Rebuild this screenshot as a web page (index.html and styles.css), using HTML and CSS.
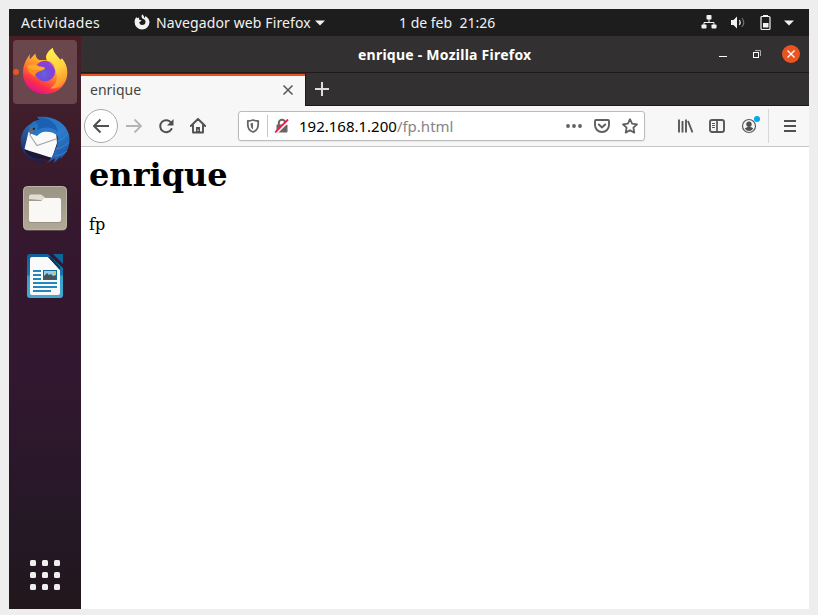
FILE: index.html
```html
<!DOCTYPE html>
<html lang="es">
<head>
<meta charset="utf-8">
<title>enrique - Mozilla Firefox</title>
<link rel="stylesheet" href="styles.css">
</head>
<body>
<div class="desktop">
  <header class="topbar">
    <span class="activities">Actividades</span>
    <svg class="app-mark" width="18" height="18" viewBox="0 0 18 18"><path d="M9.200 1.200c1.500 1.200 2 2.500 1.900 3.700.8-.3 1.200-1.300 1.100-2 2.800 1.300 4.300 3.600 4.300 6.400A7.400 7.400 0 0 1 9 16.500 7.400 7.400 0 0 1 1.600 9c0-2.100.7-3.800 1.900-5l.5 1.200c1-.5 1.800-.6 2.600-.5-.9.7-.9 1.500-.2 2.100l2 .5c-.2 1.200-1.200 1.100-2 1.800-.1 1.800 1 3 2.800 3 2 0 3.300-1.300 3.300-3.100 0-1.400-.7-2.400-2.100-2.900C8.300 5 8.100 2.900 9.200 1.200z" fill="#f2f2f2"/></svg>
    <span class="app-name">Navegador web Firefox</span>
    <svg class="app-caret" width="10" height="6" viewBox="0 0 10 6"><path d="M0 .5h10L5 5.500z" fill="#f2f2f2"/></svg>
    <span class="clock">1 de feb&nbsp; 21:26</span>
    <div class="status">
      <svg width="16" height="16" viewBox="0 0 16 16" fill="#f2f2f2"><rect x="5.500" y="0" width="5" height="4.500" rx=".8"/><rect x=".5" y="9.500" width="5" height="4" rx=".8"/><rect x="10.500" y="9.500" width="5" height="4" rx=".8"/><path d="M8 4v3M3 10V7.500h10V10" fill="none" stroke="#f2f2f2"/></svg>
      <svg width="16" height="16" viewBox="0 0 16 16"><path d="M1 5h2.500L7 1.500v12L3.500 10H1z" fill="#f2f2f2"/><path d="M9.300 5q2 2.500 0 5" fill="none" stroke="#ddd" stroke-width="1.200"/><path d="M11.800 3q4 4.500 0 9" fill="none" stroke="#777" stroke-width="1.100"/></svg>
      <svg width="12" height="16" viewBox="0 0 12 16"><path d="M4 0h5v2H4zM4 8h5.500v4.500H4z" fill="#f2f2f2"/><rect x="2" y="1.500" width="9" height="13" rx="1" fill="none" stroke="#f2f2f2" stroke-width="1.200"/></svg>
      <svg width="10" height="6" viewBox="0 0 10 6"><path d="M0 .5h10L5 5.500z" fill="#f2f2f2"/></svg>
    </div>
  </header>

  <div class="workspace">
    <nav class="dock">
      <div class="dock-item active">
        <svg width="48" height="50" viewBox="0 0 48 50">
          <defs>
            <linearGradient id="ff-body" x1=".85" y1=".1" x2=".4" y2="1"><stop offset="0" stop-color="#fff04a"/><stop offset=".35" stop-color="#ffb02e"/><stop offset=".62" stop-color="#ff702f"/><stop offset=".82" stop-color="#fb3048"/><stop offset="1" stop-color="#e31587"/></linearGradient>
            <linearGradient id="ff-flame" x1=".3" y1="0" x2=".6" y2="1"><stop offset="0" stop-color="#fff04f"/><stop offset=".5" stop-color="#ffd33d"/><stop offset="1" stop-color="#ff8a2c"/></linearGradient>
            <radialGradient id="ff-globe" cx=".45" cy=".65" r=".65"><stop offset="0" stop-color="#5d66e0"/><stop offset=".5" stop-color="#7647d8"/><stop offset="1" stop-color="#9a3ad8"/></radialGradient>
          </defs>
          <path d="M9.300 7c-.8 2-.8 4-.3 5.200L14.300 6.500c.3 3 1.500 5.200 3.700 6.500h8C23 9 27 4 31.700 1c1 5.500 5 8 7.500 12l1.800-1.500c4 4.800 5.300 9.500 5.300 14C46.300 38 36.500 47 24 47S2 38 2 26c0-7 2.300-13 7.300-19z" fill="url(#ff-body)"/>
          <circle cx="24" cy="24" r="10.300" fill="url(#ff-globe)"/>
          <path d="M25.700 12.500C25 8 28 3.500 31.700 1c1 5.500 5 8 7.500 12l1.800-1.500c5 6.500 6.200 14 3.500 21-3 7-9 9.500-15.500 9 5-3 8-8 6.500-14-1-6-4-10-9.800-15z" fill="url(#ff-flame)"/>
          <path d="M28 14c4 2 5.500 4.500 6 8-2-3-4.500-4-7.500-4.500 1 0 2-1.500 1.500-3.500z" fill="#b845c5" opacity=".5"/>
          <path d="M6 19c4-2 8-2 12 .5 3 .5 5 .5 6 1.500-1 2.500-3.500 2.500-6 3.500-3 1.500-4.200 3-4.200 5C9 27 6 23 6 19z" fill="#ff8b22"/>
          <path d="M6 19c4-2 8-2 12 .5 3 .5 5 .5 6 1.500-2 2.500-6 2-9 2-4 0-7-1-9-4z" fill="#ffa92c"/>
        </svg>
      </div>
      <div class="dock-item">
        <svg width="50" height="50" viewBox="0 0 50 50">
          <defs>
            <linearGradient id="tb-wing" x1=".1" y1="0" x2=".9" y2="1"><stop offset="0" stop-color="#2470c0"/><stop offset=".55" stop-color="#2c7ccb"/><stop offset="1" stop-color="#1c4fa0"/></linearGradient>
            <linearGradient id="tb-tail" x1="0" y1="0" x2="0" y2="1"><stop offset="0" stop-color="#2b68b4"/><stop offset="1" stop-color="#1b1b49"/></linearGradient>
          </defs>
          <path d="M10 9C-2 17-2 34 8 42c5 4 12 6 18 6-5-2-8-4-9-7L11 14z" fill="url(#tb-tail)"/>
          <path d="M8.500 17L16 13l20 3 1 12-5 15-14-3-13.500-6z" fill="#f9f9f9"/>
          <path d="M9.500 19.500L17 30.500 36 24" fill="none" stroke="#a5a5aa" stroke-width="1.100"/>
          <path d="M4.500 34.500L18 38.500 32 43l-3 2-8-2-2 1C12 43 6 39.500 4.500 34.500z" fill="#1c1737"/>
          <path d="M9.500 18C7 11 12 5 20 5l-3-3c15-2 29 5 32 18 2 10-2 19-9 24l1-3-7 7 1-5-8 5c5-4 7-11 10-17 1-5 1-9 0-11-4-3-9-4-14-3-3 1-4 2-6 4z" fill="url(#tb-wing)"/>
          <path d="M17 2c11 0 20 6 21 15-5-5-13-6-21-2 2-3 2-7-3-8l6-2z" fill="#1d60b3"/>
          <path d="M48 18c-4 5-7 7-11 8m12 1c-4 4-8 6-13 7m11 2c-4 3-7 4-12 5" fill="none" stroke="#3b8fd4" stroke-width=".8"/>
          <path d="M9.500 14l.5 6 4-3.500c2-2 0-4.500-2-4.500z" fill="#586b83"/><circle cx="13.800" cy="13.800" r="1.100" fill="#161f2d"/>
        </svg>
      </div>
      <div class="dock-item">
        <svg width="46" height="46" viewBox="0 0 46 46">
          <defs><linearGradient id="files-bg" x1="0" y1="0" x2="0" y2="1"><stop offset="0" stop-color="#9b9485"/><stop offset="1" stop-color="#b0a995"/></linearGradient></defs>
          <rect x="1" y="2" width="44" height="43.500" rx="4.500" fill="#817a70"/><rect x="1.500" y="1.500" width="43" height="43" rx="4" fill="url(#files-bg)" stroke="#bab4a4"/>
          <path d="M7 14V11.500q0-2 2-2h10l4 3v3z" fill="#e1ddd2"/>
          <path d="M7 36V16h12l3-3h15q2 0 2 2v21q0 2-2 2H9q-2 0-2-2z" fill="#8b8475" opacity=".6"/>
          <path d="M7 35V16h12l3-3h15q2 0 2 2v20q0 2-2 2H9q-2 0-2-2z" fill="#f9f8f5"/>
        </svg>
      </div>
      <div class="dock-item">
        <svg width="38" height="46" viewBox="0 0 38 46">
          <defs><linearGradient id="doc-edge" x1="0" y1="0" x2="0" y2="1"><stop offset="0" stop-color="#0e6097"/><stop offset=".48" stop-color="#1678ad"/><stop offset=".5" stop-color="#369fcb"/><stop offset="1" stop-color="#43aad2"/></linearGradient></defs>
          <path d="M1 4q0-3 3-3h18l15 14v27q0 3-3 3H4q-3 0-3-3z" fill="url(#doc-edge)"/>
          <path d="M4 6q0-2 2-2h16l12 13v23q0 2-2 2H6q-2 0-2-2z" fill="#fafafa"/>
          <path d="M22 4l12 13V14L25 4z" fill="#073b66"/>
          <path d="M27 1h10v10z" fill="#0f6699"/>
          <path d="M7 18h8M7 22h8M7 26h8M7 30h24M7 34h24M7 38h18" stroke="#2386bd" stroke-width="2"/>
          <rect x="17.500" y="17.500" width="13" height="9" fill="#94cdec" stroke="#136aa0"/><path d="M18 26v-3l3-3 2 2 2-1 2 2 3-1v4z" fill="#46545c"/><circle cx="28.500" cy="19.500" r="1.500" fill="#eebd2d"/>
        </svg>
      </div>
      <div class="apps"><i></i><i></i><i></i><i></i><i></i><i></i><i></i><i></i><i></i></div>
    </nav>

    <main class="window">
      <div class="titlebar">
        <span class="title">enrique - Mozilla Firefox</span>
        <div class="controls">
          <svg class="minimize" width="8" height="10" viewBox="0 0 8 10"><path d="M0 7.500h8" stroke="#fff"/></svg>
          <svg class="restore" width="8" height="8" viewBox="0 0 8 8"><path d="M2 .5h5.500V6" fill="none" stroke="#aaa"/><rect x=".5" y="2.500" width="5" height="5" fill="none" stroke="#fff"/></svg>
          <svg width="18" height="18" viewBox="0 0 18 18"><circle cx="9" cy="9" r="9" fill="#e95420"/><path d="M5.500 5.500l7 7m0-7l-7 7" stroke="#fff" stroke-width="1.400"/></svg>
        </div>
      </div>
      <div class="tabs">
        <div class="tab"><span class="tab-name">enrique</span><svg width="12" height="12" viewBox="0 0 12 12"><path d="M1.500 1.500l9 9m0-9l-9 9" stroke="#555" stroke-width="1.500"/></svg></div>
        <div class="new-tab"><svg width="14" height="14" viewBox="0 0 14 14"><path d="M7 0v14M0 7h14" stroke="#ddd" stroke-width="2"/></svg></div>
      </div>
      <div class="toolbar">
        <div class="back"><svg width="18" height="16" viewBox="0 0 18 16"><path d="M8.500 1.500L2 8l6.500 6.500M2 8h15" fill="none" stroke="#505050" stroke-width="2" stroke-linejoin="round"/></svg></div>
        <svg class="forward" width="16" height="16" viewBox="0 0 16 16"><path d="M8.500 1.500L15 8l-6.500 6.500M15 8H0" fill="none" stroke="#b4b4b4" stroke-width="1.800"/></svg>
        <svg class="reload" width="16" height="16" viewBox="0 0 16 16"><path d="M13 4.500A6 6 0 1 0 13.500 11" fill="none" stroke="#505050" stroke-width="2" stroke-linecap="round"/><path d="M15.500 1v6.500H9z" fill="#505050"/></svg>
        <svg class="home" width="16" height="16" viewBox="0 0 16 16"><path d="M.8 8L8 1l7.200 7M3 7v7.500h10V7" fill="none" stroke="#505050" stroke-width="1.900" stroke-linecap="round" stroke-linejoin="round"/><path d="M6 9h4v6H6z" fill="#505050"/><path d="M8 11.500v1.500" stroke="#f8f8f8"/></svg>
        <div class="urlbar">
          <svg class="shield" width="14" height="14" viewBox="0 0 14 14"><path d="M7 1c2 .8 3.500 1 5.200 1v3.500C12.200 9 10.500 11.800 7 13 3.500 11.800 1.800 9 1.800 5.500V2C3.500 2 5 1.800 7 1z" fill="none" stroke="#666" stroke-width="1.800" stroke-linejoin="round"/><path d="M7 3.700v6.800C5.200 9.400 4.500 7.500 4.500 4.400z" fill="#666"/></svg>
          <i class="divider"></i>
          <svg class="lock" width="16" height="16" viewBox="0 0 16 16"><path d="M4.800 7V5a3.200 3.200 0 0 1 6.400 0v2" fill="none" stroke="#666" stroke-width="2"/><rect x="2.500" y="6.500" width="11" height="8" rx="1" fill="#666"/><path d="M2 15L15 2" stroke="#fff" stroke-width="3"/><path d="M1.200 14.300L14 1.500" stroke="#ff1744" stroke-width="1.900"/></svg>
          <span class="address">192.168.1.200<span class="path">/fp.html</span></span>
          <svg class="more" width="16" height="4" viewBox="0 0 16 4" fill="#606060"><circle cx="2" cy="2" r="1.900"/><circle cx="8" cy="2" r="1.900"/><circle cx="14" cy="2" r="1.900"/></svg>
          <svg width="16" height="16" viewBox="0 0 16 16"><path d="M2 2h12q1 0 1 1v4c0 4-3 7-7 7S1 11 1 7V3q0-1 1-1z" fill="none" stroke="#606060" stroke-width="1.900"/><path d="M4.800 6.500L8 9.500l3.200-3" fill="none" stroke="#606060" stroke-width="2" stroke-linecap="round"/></svg>
          <svg width="16" height="16" viewBox="0 0 16 16"><path d="M8 1.200l2.100 4.500 4.900.6-3.600 3.400.9 4.900L8 12.200l-4.300 2.400.9-4.900L1 6.300l4.900-.6z" fill="none" stroke="#606060" stroke-width="1.800" stroke-linejoin="round"/></svg>
        </div>
        <div class="tools">
          <svg width="16" height="16" viewBox="0 0 16 16"><path d="M2 1.500v13M5.500 3v11.500M9 1.500v13M11 3l4.500 11.500" fill="none" stroke="#585858" stroke-width="1.900"/></svg>
          <svg width="16" height="16" viewBox="0 0 16 16"><rect x="1" y="2" width="14" height="12" rx="2" fill="none" stroke="#585858" stroke-width="1.900"/><path d="M8 2v12" stroke="#585858" stroke-width="1.700"/><path d="M3 5.500h3M3 7.500h3M3 9.500h3" stroke="#585858"/></svg>
          <div class="account"><svg width="16" height="16" viewBox="0 0 16 16"><circle cx="8" cy="8" r="6.500" fill="none" stroke="#585858" stroke-width="1.200"/><circle cx="8" cy="6.200" r="2.700" fill="#505050"/><path d="M3.700 10.500q2-1.500 3-1.500h3q1 0 2.600 1.500-1.800 2.500-4.300 2.500t-4.300-2.500z" fill="#505050"/></svg><i class="badge"></i></div>
          <i class="separator"></i>
          <svg class="menu" width="12" height="12" viewBox="0 0 12 12"><path d="M0 1h12M0 6h12M0 11h12" stroke="#505050" stroke-width="1.800"/></svg>
        </div>
      </div>
      <article class="page"><h1>enrique</h1><p>fp</p></article>
    </main>
  </div>
</div>
</body>
</html>
```
FILE: styles.css
```css
* { box-sizing: border-box; }
body { margin: 0; padding: 9px; height: 615px; overflow: hidden; background: #eee; font-family: "Noto Sans", sans-serif; font-size: 14px; }
svg { display: block; flex: none; }
i { display: block; flex: none; }
.desktop { width: 800px; height: 600px; display: flex; flex-direction: column; }
.topbar { height: 27px; flex: none; display: flex; align-items: center; background: #1d1d1d; color: #f2f2f2; padding-left: 12px; white-space: nowrap; }
.topbar span { padding-bottom: 1px; }
.activities { width: 112px; letter-spacing: .4px; }
.app-mark { margin-top: -1px; }
.app-name { width: 155px; margin-left: 5px; letter-spacing: .12px; }
.app-caret { margin-left: 4px; }
.clock { margin-left: 74px; width: 97px; }
.status { display: flex; align-items: center; margin-left: auto; padding-right: 15px; gap: 13px; }
.workspace { flex: 1; display: flex; min-height: 0; }
.dock { width: 72px; flex: none; padding: 4px; display: flex; flex-direction: column; gap: 4px; background: linear-gradient(#4a1e24 0, #43202b 45px, #3b1b2b 115px, #35182e 190px, #321730 330px, #241825 500px, #21171c 100%); }
.dock-item { height: 64px; display: flex; align-items: center; justify-content: center; position: relative; }
.dock-item.active { background: #69474d; border-radius: 4px; }
.active::before { content: ""; position: absolute; left: 0; top: 29px; width: 6px; height: 6px; border-radius: 50%; background: #e95420; }
.apps { margin: auto auto 15px; display: grid; grid-template-columns: repeat(3, 6px); gap: 6px; }
.apps i { width: 6px; height: 6px; border-radius: 1.500px; background: #f0eff0; }
.window { flex: 1; display: flex; flex-direction: column; min-width: 0; background: #fff; }
.titlebar { height: 37px; flex: none; display: flex; align-items: center; justify-content: flex-end; background: #323031; border-bottom: 1px solid #1d1b1c; color: #fff; }
.title { width: 176px; font-weight: 700; white-space: nowrap; letter-spacing: .24px; }
.controls { margin-left: 185px; padding-right: 9px; display: flex; align-items: center; }
.minimize { margin-right: 26px; }
.restore { margin-right: 21px; }
.tabs { height: 33px; flex: none; display: flex; background: #323031; }
.tab { width: 224px; padding: 0 11px 2px 9px; display: flex; align-items: center; justify-content: space-between; background: #f7f7f7; border-top: 2px solid #e95420; margin-top: 1px; color: #444; }
.tab-name { padding-bottom: 1px; }
.new-tab { flex: 1; padding: 9px 0 0 9px; border-left: 1px solid #1b191a; border-bottom: 1px solid #1b191a; }
.toolbar { height: 41px; flex: none; display: flex; align-items: center; background: #f7f7f7; border-bottom: 1px solid #c6c6c6; padding-left: 3px; }
.back { width: 34px; height: 34px; border: 1px solid #aaa; border-radius: 50%; background: #fff; display: flex; align-items: center; justify-content: center; }
.forward { margin-left: 8px; }
.reload { margin-left: 16px; }
.home { margin-left: 16px; }
.urlbar { width: 407px; height: 30px; margin-left: 32px; padding: 0 6px 0 7px; display: flex; align-items: center; background: #fff; border: 1px solid #bbb; border-radius: 3px; box-shadow: 0 1px 2px #0001; }
.divider { width: 1px; height: 22px; margin-left: 7px; background: #c8c8c8; }
.lock { margin-left: 6px; }
.address { margin-left: 9px; color: #000; flex: 1; white-space: nowrap; font-size: 15px; }
.path { color: #858585; }
.more { margin-right: 12px; }
.urlbar svg:last-child { margin-left: 12px; }
.tools { display: flex; align-items: center; margin-left: 32px; gap: 16px; }
.account { position: relative; }
.badge { position: absolute; right: -3px; top: -2px; width: 6px; height: 6px; border-radius: 50%; background: #00a9f4; }
.separator { width: 1px; height: 34px; margin-left: -5px; background: #d8d8d8; }
.menu { margin-left: -1px; }
.page { padding: 9px 8px; color: #000; font-family: "DejaVu Serif", serif; font-size: 16px; }
.page h1 { margin: 0; font-size: 32px; line-height: 38px; }
.page p { margin: 21px 0 0; line-height: 19px; }
```
